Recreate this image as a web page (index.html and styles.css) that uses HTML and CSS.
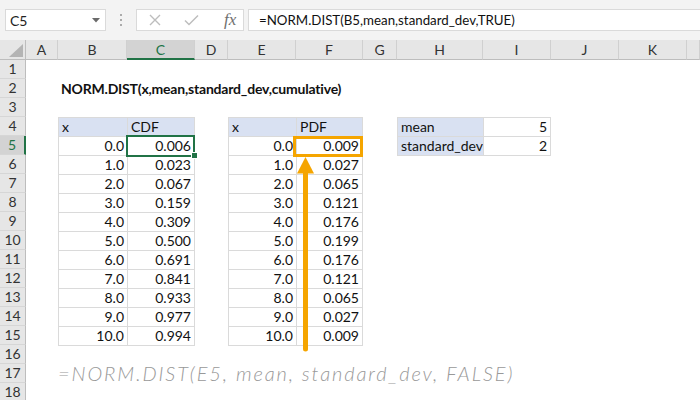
FILE: index.html
```html
<!DOCTYPE html>
<html>
<head>
<meta charset="utf-8">
<link rel="stylesheet" href="styles.css">
</head>
<body>
<div class="toolbar">
  <div class="namebox"><span class="ref">C5</span><svg class="dd" width="8" height="5" viewBox="0 0 8 5"><polygon points="0,0 8,0 4,4.5" fill="#6a6a6a"/></svg></div>
  <div class="grip"><i></i><i></i><i></i></div>
  <div class="fxbox">
    <svg class="ico-x" width="12" height="12" viewBox="0 0 12 12"><path d="M1 1 L11 11 M11 1 L1 11" stroke="#bdbdbd" stroke-width="1.4" fill="none"/></svg>
    <svg class="ico-check" width="15" height="12" viewBox="0 0 15 12"><path d="M1 6.5 L5 10.5 L14 1.5" stroke="#bdbdbd" stroke-width="1.5" fill="none"/></svg>
    <span class="fx">fx</span>
  </div>
  <div class="input">=NORM.DIST(B5,mean,standard_dev,TRUE)</div>
</div>
<div class="sheet">
  <div class="corner"><svg class="tri" width="14" height="13" viewBox="0 0 14 13"><polygon points="14,0 14,13 0,13" fill="#b4b4b4"/></svg></div>
  <div class="ch">A</div>
  <div class="ch">B</div>
  <div class="ch sel">C</div>
  <div class="ch">D</div>
  <div class="ch">E</div>
  <div class="ch">F</div>
  <div class="ch">G</div>
  <div class="ch">H</div>
  <div class="ch">I</div>
  <div class="ch">J</div>
  <div class="ch">K</div>
  <div class="ch"></div>

  <div class="rowhdr">
    <div class="rh">1</div><div class="rh">2</div><div class="rh">3</div><div class="rh">4</div>
    <div class="rh sel">5</div><div class="rh">6</div><div class="rh">7</div><div class="rh">8</div>
    <div class="rh">9</div><div class="rh">10</div><div class="rh">11</div><div class="rh">12</div>
    <div class="rh">13</div><div class="rh">14</div><div class="rh">15</div><div class="rh">16</div>
    <div class="rh">17</div><div class="rh">18</div>
  </div>

  <div class="title">NORM.DIST(x,mean,standard_dev,cumulative)</div>

  <div class="tbl t1">
    <div class="c h">x</div><div class="c h">CDF</div>
    <div class="c">0.0</div><div class="c active">0.006</div>
    <div class="c">1.0</div><div class="c">0.023</div>
    <div class="c">2.0</div><div class="c">0.067</div>
    <div class="c">3.0</div><div class="c">0.159</div>
    <div class="c">4.0</div><div class="c">0.309</div>
    <div class="c">5.0</div><div class="c">0.500</div>
    <div class="c">6.0</div><div class="c">0.691</div>
    <div class="c">7.0</div><div class="c">0.841</div>
    <div class="c">8.0</div><div class="c">0.933</div>
    <div class="c">9.0</div><div class="c">0.977</div>
    <div class="c">10.0</div><div class="c">0.994</div>
  </div>

  <div class="tbl t2">
    <div class="c h">x</div><div class="c h">PDF</div>
    <div class="c">0.0</div><div class="c">0.009</div>
    <div class="c">1.0</div><div class="c">0.027</div>
    <div class="c">2.0</div><div class="c">0.065</div>
    <div class="c">3.0</div><div class="c">0.121</div>
    <div class="c">4.0</div><div class="c">0.176</div>
    <div class="c">5.0</div><div class="c">0.199</div>
    <div class="c">6.0</div><div class="c">0.176</div>
    <div class="c">7.0</div><div class="c">0.121</div>
    <div class="c">8.0</div><div class="c">0.065</div>
    <div class="c">9.0</div><div class="c">0.027</div>
    <div class="c">10.0</div><div class="c">0.009</div>
  </div>

  <div class="tbl t3">
    <div class="c h">mean</div><div class="c">5</div>
    <div class="c h">standard_dev</div><div class="c">2</div>
  </div>

  <div class="hand">=NORM.DIST(E5, mean, standard_dev, FALSE)</div>

  <div class="hl"></div>
  <svg class="arrow" width="700" height="360" viewBox="0 0 700 360">
    <line x1="305.5" y1="130" x2="305.5" y2="309" stroke="#f5a500" stroke-width="5" stroke-linecap="round"/>
    <polygon points="305.5,117 314,133.5 297,133.5" fill="#f5a500"/>
  </svg>
</div>
</body>
</html>
```

FILE: styles.css
```css
body {
  margin: 0;
  width: 700px;
  height: 400px;
  overflow: hidden;
  background: #fff;
  font-family: Lato, "Open Sans", sans-serif;
  color: #111;
}

.toolbar {
  height: 40px;
  box-sizing: border-box;
  background: #f3f3f3;
  display: flex;
  align-items: flex-start;
  padding: 9px 0 0 5px;
}

.namebox {
  width: 101px;
  height: 22px;
  box-sizing: border-box;
  background: #fff;
  border: 1px solid #dadada;
  display: flex;
  align-items: center;
  justify-content: space-between;
  padding: 0 5px 0 4px;
  font-size: 14px;
  color: #222;
}

.grip {
  width: 30px;
  height: 22px;
  display: flex;
  flex-direction: column;
  align-items: center;
  justify-content: center;
  gap: 3px;
}

.grip i {
  display: block;
  width: 2px;
  height: 2px;
  background: #ababab;
}

.fxbox {
  width: 108px;
  height: 22px;
  box-sizing: border-box;
  background: #fff;
  border: 1px solid #dadada;
  display: flex;
  align-items: center;
  margin-right: 4px;
}

.ico-x { margin-left: 12px; }
.ico-check { margin-left: 23px; }

.fx {
  margin-left: 25px;
  font-family: "Liberation Serif", serif;
  font-style: italic;
  font-size: 17px;
  color: #6f6f6f;
  line-height: 20px;
}

.input {
  flex: 1;
  height: 22px;
  box-sizing: border-box;
  background: #fff;
  border: 1px solid #dadada;
  border-right: none;
  padding-left: 10px;
  line-height: 20px;
  font-size: 13.3px;
  color: #111;
  white-space: nowrap;
}

.sheet {
  position: relative;
  display: grid;
  grid-template-columns: 26px 32px 69px 68px 33px 68px 67px 34px 86px 68px 68px 68px 1fr;
  grid-template-rows: 20px repeat(18, 19px);
}

.corner {
  background: #e6e6e6;
  border-right: 1px solid #bdbdbd;
  border-bottom: 1px solid #bdbdbd;
  box-sizing: border-box;
  display: flex;
  align-items: flex-end;
  justify-content: flex-end;
  padding: 0 2px 2px 0;
}

.ch {
  background: #e6e6e6;
  border-right: 1px solid #d0d0d0;
  border-bottom: 1px solid #bdbdbd;
  box-sizing: border-box;
  display: flex;
  align-items: center;
  justify-content: center;
  font-size: 14px;
  color: #333;
}

.ch.sel {
  background: #d3d3d3;
  color: #217346;
  border-bottom: 2px solid #217346;
}

.rowhdr {
  grid-column: 1;
  grid-row: 2 / span 18;
  display: flex;
  flex-direction: column;
}

.rh {
  height: 19px;
  flex: none;
  box-sizing: border-box;
  background: #e6e6e6;
  border-bottom: 1px solid #d6d6d6;
  border-right: 1px solid #bdbdbd;
  text-align: center;
  font-size: 14px;
  line-height: 18px;
  color: #333;
}

.rh.sel {
  background: #d3d3d3;
  color: #217346;
  border-right: 2px solid #217346;
}

.title {
  grid-column: 3 / span 8;
  grid-row: 3;
  padding-left: 3px;
  font-weight: bold;
  font-size: 14px;
  line-height: 19px;
  white-space: nowrap;
  letter-spacing: -0.2px;
}

.tbl {
  display: grid;
  grid-auto-rows: 19px;
  align-self: start;
  border-right: 1px solid #dadada;
  border-bottom: 1px solid #dadada;
}

.t1 {
  grid-column: 3 / span 2;
  grid-row: 5 / span 12;
  grid-template-columns: 69px 67px;
}

.t2 {
  grid-column: 6 / span 2;
  grid-row: 5 / span 12;
  grid-template-columns: 68px 66px;
}

.t3 {
  grid-column: 9 / span 2;
  grid-row: 5 / span 2;
  grid-template-columns: 86px 67px;
}

.c {
  box-sizing: border-box;
  border-left: 1px solid #dadada;
  border-top: 1px solid #dadada;
  padding: 0 3px;
  font-size: 14px;
  line-height: 18px;
  text-align: right;
  white-space: nowrap;
  color: #111;
}

.c.h {
  background: #d9e1f2;
  text-align: left;
}

.c.active {
  position: relative;
}

.c.active::after {
  content: "";
  position: absolute;
  left: -2px;
  top: -2px;
  right: -1px;
  bottom: -2px;
  border: 2px solid #217346;
}

.c.active::before {
  content: "";
  position: absolute;
  right: -4px;
  bottom: -4px;
  width: 5px;
  height: 5px;
  background: #217346;
  border: 1px solid #fff;
  z-index: 1;
}

.hand {
  grid-column: 3 / span 10;
  grid-row: 18;
  font-style: italic;
  font-weight: 300;
  font-size: 20px;
  letter-spacing: 1.9px;
  line-height: 19px;
  color: #999;
  white-space: nowrap;
}

.hl {
  position: absolute;
  left: 293px;
  top: 96px;
  width: 70px;
  height: 21px;
  box-sizing: border-box;
  border: 3px solid #f5a500;
}

.arrow {
  position: absolute;
  left: 0;
  top: 0;
  pointer-events: none;
}
```
